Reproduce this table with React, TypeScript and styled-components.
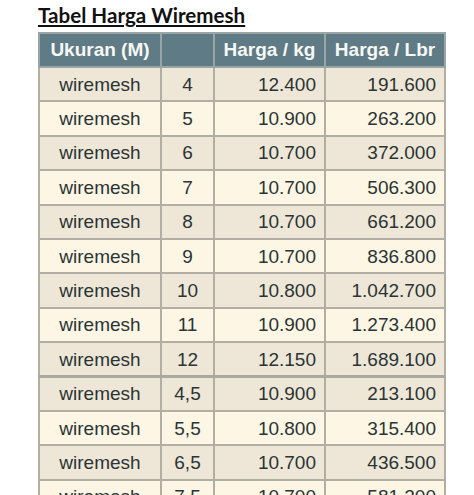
import React from "react";
import styled, { createGlobalStyle } from "styled-components";

const Global = createGlobalStyle`
  html, body { margin: 0; padding: 0; background: #ffffff; }
  body { font-family: "Liberation Sans", Arial, sans-serif; }
`;

const Page = styled.div`
  padding: 3px 0 0 38px;
  width: 474px;
  height: 495px;
  box-sizing: border-box;
  overflow: hidden;
`;

const Title = styled.h1`
  margin: 0 0 5px 0;
  font-family: Lato, "Open Sans", sans-serif;
  font-weight: 700;
  font-size: 20.6px;
  line-height: 24px;
  color: #111;
  text-decoration: underline;
  text-decoration-thickness: 2px;
  text-underline-offset: 2px;
`;

const Table = styled.table`
  border-collapse: collapse;
  table-layout: fixed;
  width: 406px;
  font-family: "Liberation Sans", Arial, sans-serif;
  font-size: 19px;
  color: #2b3434;
  border: 2px solid #a9a89f;
`;

const HeadCell = styled.th`
  background: #5f7b86;
  color: #f7f7f3;
  font-weight: 700;
  height: 34px;
  padding: 0 8px;
  text-align: center;
  border: 2px solid #9aa5a8;
  box-sizing: border-box;
`;

const Body = styled.tbody<{ $split?: boolean }>`
  ${(p) => (p.$split ? "border-top: 3px solid #aaa99f;" : "")}
  & tr:nth-child(odd) td { background: #eee7d8; }
  & tr:nth-child(even) td { background: #fdf6e5; }
`;

const Cell = styled.td<{ $align: "center" | "right" }>`
  height: 34.4px;
  box-sizing: border-box;
  padding: 1px 8px 0 8px;
  text-align: ${(p) => p.$align};
  border: 2px solid #b1aea4;
  white-space: nowrap;
`;

type Row = [string, string, string, string];

const groupA: Row[] = [
  ["wiremesh", "4", "12.400", "191.600"],
  ["wiremesh", "5", "10.900", "263.200"],
  ["wiremesh", "6", "10.700", "372.000"],
  ["wiremesh", "7", "10.700", "506.300"],
  ["wiremesh", "8", "10.700", "661.200"],
  ["wiremesh", "9", "10.700", "836.800"],
  ["wiremesh", "10", "10.800", "1.042.700"],
  ["wiremesh", "11", "10.900", "1.273.400"],
  ["wiremesh", "12", "12.150", "1.689.100"],
];

const groupB: Row[] = [
  ["wiremesh", "4,5", "10.900", "213.100"],
  ["wiremesh", "5,5", "10.800", "315.400"],
  ["wiremesh", "6,5", "10.700", "436.500"],
  ["wiremesh", "7,5", "10.700", "581.200"],
];

const renderRows = (rows: Row[]) =>
  rows.map((r, i) => (
    <tr key={i}>
      <Cell $align="center">{r[0]}</Cell>
      <Cell $align="center">{r[1]}</Cell>
      <Cell $align="right">{r[2]}</Cell>
      <Cell $align="right">{r[3]}</Cell>
    </tr>
  ));

export default function App() {
  return (
    <>
      <Global />
      <Page>
        <Title>Tabel Harga Wiremesh</Title>
        <Table>
          <colgroup>
            <col style={{ width: 122 }} />
            <col style={{ width: 53 }} />
            <col style={{ width: 111 }} />
            <col style={{ width: 120 }} />
          </colgroup>
          <thead>
            <tr>
              <HeadCell>Ukuran (M)</HeadCell>
              <HeadCell></HeadCell>
              <HeadCell>Harga / kg</HeadCell>
              <HeadCell>Harga / Lbr</HeadCell>
            </tr>
          </thead>
          <Body>{renderRows(groupA)}</Body>
          <Body $split>{renderRows(groupB)}</Body>
        </Table>
      </Page>
    </>
  );
}
